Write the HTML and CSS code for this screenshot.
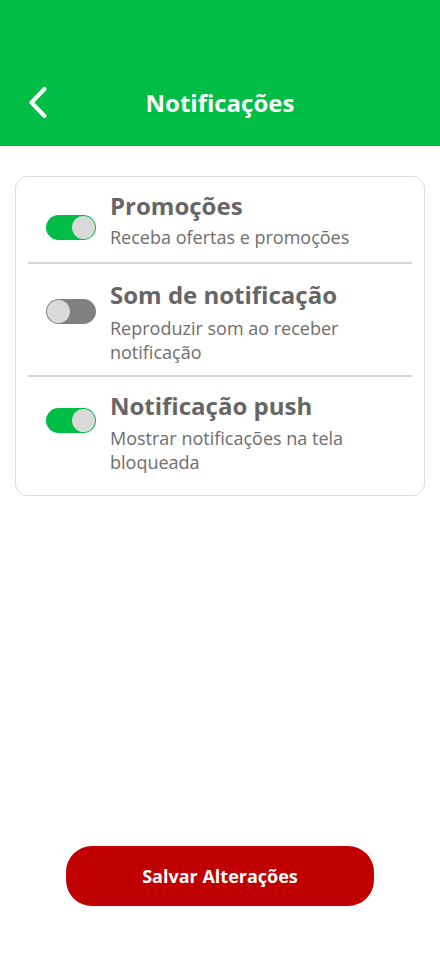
FILE: index.html
```
<!DOCTYPE html>
<html lang="pt-BR">
<head>
<meta charset="utf-8">
<title>Notificações</title>
<link rel="stylesheet" href="styles.css">
</head>
<body>
<div class="screen">
  <header class="header">
    <button class="back" aria-label="Voltar">
      <svg width="20" height="32" viewBox="0 0 20 32"><path d="M15.5 3 L2.5 16.5 L15.5 30" fill="none" stroke="#fff" stroke-width="4" stroke-linecap="round" stroke-linejoin="round"/></svg>
    </button>
    <h1 class="title">Notificações</h1>
  </header>
  <main class="content">
    <div class="card">
      <div class="row row-1">
        <span class="toggle on"><span class="knob"></span></span>
        <div class="text">
          <div class="row-title">Promoções</div>
          <div class="row-sub">Receba ofertas e promoções</div>
        </div>
      </div>
      <div class="divider"></div>
      <div class="row row-2">
        <span class="toggle off"><span class="knob"></span></span>
        <div class="text">
          <div class="row-title">Som de notificação</div>
          <div class="row-sub">Reproduzir som ao receber notificação</div>
        </div>
      </div>
      <div class="divider"></div>
      <div class="row row-3">
        <span class="toggle on"><span class="knob"></span></span>
        <div class="text">
          <div class="row-title">Notificação push</div>
          <div class="row-sub">Mostrar notificações na tela bloqueada</div>
        </div>
      </div>
    </div>
  </main>
  <div class="footer">
    <button class="save">Salvar Alterações</button>
  </div>
</div>
</body>
</html>
```

FILE: styles.css
```
* { box-sizing: border-box; }
html, body { margin: 0; padding: 0; }
body {
  font-family: "Open Sans", "Noto Sans", sans-serif;
  background: #fff;
  width: 440px;
  height: 956px;
}
.screen {
  display: flex;
  flex-direction: column;
  height: 956px;
}
.header {
  background: #00bd46;
  height: 146px;
  display: flex;
  align-items: flex-end;
  justify-content: center;
  padding-bottom: 28px;
  position: relative;
}
.back {
  position: absolute;
  left: 29px;
  top: 86px;
  background: none;
  border: 0;
  padding: 0;
  width: 20px;
  height: 32px;
  display: flex;
}
.title {
  margin: 0;
  color: #fff;
  font-size: 24px;
  font-weight: 700;
  line-height: 30px;
}
.content {
  flex: 1;
  padding: 30px 15px 0;
}
.card {
  border: 1px solid #dddddd;
  border-radius: 12px;
  padding: 0 12px;
}
.row {
  display: flex;
  align-items: flex-start;
}
.row-1 { padding: 14px 0 13px; }
.row-2 { padding: 16px 0 11px; }
.row-3 { padding: 14px 0 21px; }
.toggle {
  width: 50px;
  height: 25px;
  border-radius: 13px;
  margin: 19px 14px 0 18px;
  flex: none;
  display: flex;
  align-items: center;
  padding: 0 1px;
}
.row-1 .toggle { margin-top: 24px; }
.row-3 .toggle { margin-top: 17px; }
.toggle.on { background: #00bd46; justify-content: flex-end; }
.toggle.off { background: #808080; justify-content: flex-start; }
.knob {
  width: 23px;
  height: 23px;
  border-radius: 50%;
  background: #d9d9d9;
}
.text { flex: 1; }
.row-title {
  color: #666666;
  font-size: 24px;
  font-weight: 700;
  line-height: 30px;
}
.row-sub {
  color: #6e6e6e;
  font-size: 18px;
  line-height: 24px;
  margin-top: 6px;
}
.row-1 .row-sub { margin-top: 4px; }
.row-3 .row-sub { margin-top: 5px; }
.divider {
  height: 2px;
  background: #d6d6d6;
}
.footer {
  display: flex;
  justify-content: center;
  padding-bottom: 50px;
}
.save {
  width: 308px;
  height: 60px;
  border: 0;
  border-radius: 26px;
  background: #c00000;
  color: #fff;
  font-family: "Open Sans", "Noto Sans", sans-serif;
  font-size: 18px;
  font-weight: 700;
}
```
